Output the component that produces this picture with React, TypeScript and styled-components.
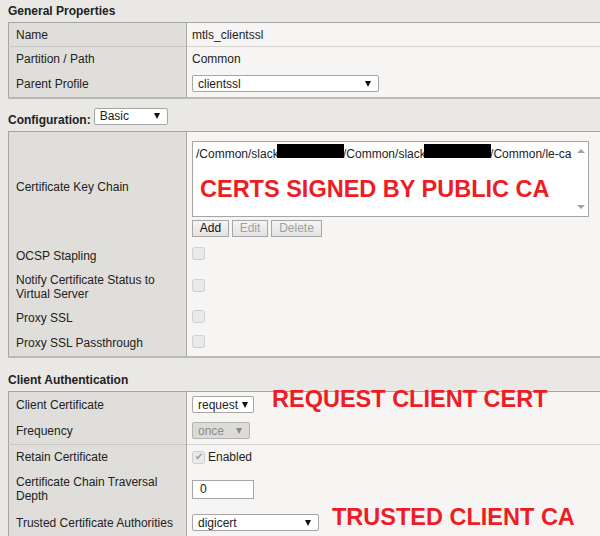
import React from 'react'
import styled, { createGlobalStyle } from 'styled-components'

const GlobalStyle = createGlobalStyle`
  body {
    margin: 0;
    background: #e9e8e4;
    font-family: "Liberation Sans", Arial, sans-serif;
    font-size: 12px;
    color: #222;
    overflow: hidden;
  }
`

const Page = styled.div`
  padding-left: 8px;
  width: 640px;
`

const SectionTitle = styled.div<{ $top: number }>`
  font-weight: bold;
  font-size: 12px;
  line-height: 14px;
  padding-top: ${p => p.$top}px;
  height: 14px;
  margin-bottom: 4px;
`

const ConfigBar = styled.div`
  display: flex;
  align-items: flex-end;
  gap: 3px;
  margin-top: 9px;
  margin-bottom: 6px;
`

const ConfigLabel = styled.span`
  font-weight: bold;
  line-height: 12px;
  position: relative;
  top: 1px;
`

const Table = styled.table`
  width: 620px;
  border-collapse: collapse;
  border-top: 1px solid #a4a4a4;
  border-left: 1px solid #a4a4a4;
  border-bottom: 2px solid #b9b9b9;
`

const Row = styled.tr<{ $h: number }>`
  height: ${p => p.$h}px;
  & + & td {
    border-top: 1px solid #d3d2cf;
  }
  & + & th {
    border-top: 1px solid #c9c8c5;
  }
`

const Label = styled.th`
  width: 163px;
  background: #dfdedb;
  border-right: 1px solid #a9a9a9;
  padding: 0 7px;
  text-align: left;
  font-weight: normal;
  line-height: 14px;
  vertical-align: middle;
`

const Value = styled.td<{ $top?: boolean }>`
  background: #f6f5f3;
  padding: ${p => (p.$top ? '9px 5px 6px' : '0 5px')};
  vertical-align: ${p => (p.$top ? 'top' : 'middle')};
  line-height: 14px;
`

const CellLine = styled.div`
  display: flex;
  align-items: center;
`

const SelectBox = styled.div<{ $w: number; $disabled?: boolean }>`
  box-sizing: border-box;
  width: ${p => p.$w}px;
  height: 17px;
  display: flex;
  align-items: center;
  justify-content: space-between;
  padding: 0 7px 0 5px;
  border: 1px solid ${p => (p.$disabled ? '#b4b4b0' : '#a6a6a6')};
  border-radius: 2px;
  background: ${p => (p.$disabled ? '#dcdbd7' : '#fff')};
  color: ${p => (p.$disabled ? '#8a8a8a' : '#222')};
  line-height: 14px;
`

const Arrow = styled.span<{ $disabled?: boolean }>`
  flex: none;
  width: 0;
  height: 0;
  margin-left: 4px;
  border-left: 3.5px solid transparent;
  border-right: 3.5px solid transparent;
  border-top: 6px solid ${p => (p.$disabled ? '#8a8a8a' : '#111')};
`

const Select = ({ w, value, disabled }: { w: number; value: string; disabled?: boolean }) => (
  <SelectBox $w={w} $disabled={disabled}>
    <span>{value}</span>
    <Arrow $disabled={disabled} />
  </SelectBox>
)

const ListBox = styled.div`
  box-sizing: border-box;
  width: 397px;
  height: 76px;
  border: 1px solid #a6a6a6;
  background: #fff;
  display: flex;
`

const ListContent = styled.div`
  flex: 1;
  padding: 2px 0 0 3px;
  white-space: nowrap;
  overflow: hidden;
`

const Redacted = styled.span`
  display: inline-block;
  width: 67px;
  height: 14px;
  background: #000;
  vertical-align: 0;
  margin: 0 -1px 0 -5px;
`

const Scroll = styled.div`
  width: 15px;
  display: flex;
  flex-direction: column;
  justify-content: space-between;
  align-items: center;
  padding: 7px 0;
`

const ScrollArrow = styled.span<{ $up?: boolean }>`
  width: 0;
  height: 0;
  border-left: 4px solid transparent;
  border-right: 4px solid transparent;
  ${p => (p.$up ? 'border-bottom: 4px solid #a3a3a3;' : 'border-top: 4px solid #a3a3a3;')}
`

const Annotation = styled.span<{ $ml?: number }>`
  color: #ee1c25;
  font-weight: bold;
  font-size: 23.5px;
  line-height: 20px;
  margin-left: ${p => p.$ml ?? 0}px;
  white-space: nowrap;
  position: relative;
  top: -6px;
`

const BigNote = styled.div`
  color: #ee1c25;
  font-weight: bold;
  font-size: 23.5px;
  line-height: 22px;
  margin: 17px 0 0 4px;
`

const Buttons = styled.div`
  display: flex;
  gap: 3px;
  margin-top: 3px;
`

const Button = styled.div<{ $disabled?: boolean; $w: number }>`
  box-sizing: border-box;
  width: ${p => p.$w}px;
  height: 17px;
  border: 1px solid #a6a6a6;
  background: linear-gradient(#f4f4f4, #e3e3e3);
  color: ${p => (p.$disabled ? '#a0a0a0' : '#111')};
  text-align: center;
  line-height: 15px;
`

const Check = styled.span<{ $lift?: number }>`
  box-sizing: border-box;
  width: 13px;
  height: 13px;
  border: 1px solid #cfcfcf;
  border-radius: 3px;
  background: #eaeaea;
  display: inline-flex;
  align-items: center;
  justify-content: center;
  color: #9a9a9a;
  font-size: 10px;
  line-height: 1;
  position: relative;
  top: ${p => -(p.$lift ?? 0)}px;
`

const CheckText = styled.span`
  margin-left: 3px;
`

const TextInput = styled.div`
  box-sizing: border-box;
  width: 62px;
  height: 19px;
  border: 1px solid #a6a6a6;
  background: #fff;
  padding: 0 7px;
  line-height: 17px;
`

const CheckRowValue = styled(Value)`
  vertical-align: top;
  padding-top: 4px;
`

export default function App() {
  return (
    <Page>
      <GlobalStyle />
      <SectionTitle $top={4}>General Properties</SectionTitle>
      <Table>
        <tbody>
          <Row $h={24}>
            <Label>Name</Label>
            <Value>mtls_clientssl</Value>
          </Row>
          <Row $h={24}>
            <Label>Partition / Path</Label>
            <Value>Common</Value>
          </Row>
          <Row $h={27}>
            <Label>Parent Profile</Label>
            <Value>
              <Select w={187} value="clientssl" />
            </Value>
          </Row>
        </tbody>
      </Table>

      <ConfigBar>
        <ConfigLabel>Configuration:</ConfigLabel>
        <Select w={74} value="Basic" />
      </ConfigBar>
      <Table>
        <tbody>
          <Row $h={111}>
            <Label>Certificate Key Chain</Label>
            <Value $top>
              <ListBox>
                <ListContent>
                  /Common/slack.<Redacted />/Common/slack.<Redacted />/Common/le-ca
                  <BigNote>CERTS SIGNED BY PUBLIC CA</BigNote>
                </ListContent>
                <Scroll>
                  <ScrollArrow $up />
                  <ScrollArrow />
                </Scroll>
              </ListBox>
              <Buttons>
                <Button $w={37}>Add</Button>
                <Button $w={36} $disabled>Edit</Button>
                <Button $w={51} $disabled>Delete</Button>
              </Buttons>
            </Value>
          </Row>
          <Row $h={26}>
            <Label>OCSP Stapling</Label>
            <CheckRowValue>
              <Check />
            </CheckRowValue>
          </Row>
          <Row $h={37}>
            <Label>Notify Certificate Status to Virtual Server</Label>
            <Value>
              <CellLine>
                <Check $lift={2} />
              </CellLine>
            </Value>
          </Row>
          <Row $h={25}>
            <Label>Proxy SSL</Label>
            <CheckRowValue>
              <Check />
            </CheckRowValue>
          </Row>
          <Row $h={26}>
            <Label>Proxy SSL Passthrough</Label>
            <CheckRowValue>
              <Check />
            </CheckRowValue>
          </Row>
        </tbody>
      </Table>

      <SectionTitle $top={15}>Client Authentication</SectionTitle>
      <Table>
        <tbody>
          <Row $h={27}>
            <Label>Client Certificate</Label>
            <Value>
              <CellLine>
                <Select w={62} value="request" />
                <Annotation $ml={18}>REQUEST CLIENT CERT</Annotation>
              </CellLine>
            </Value>
          </Row>
          <Row $h={26}>
            <Label>Frequency</Label>
            <Value>
              <Select w={58} value="once" disabled />
            </Value>
          </Row>
          <Row $h={26}>
            <Label>Retain Certificate</Label>
            <Value>
              <CellLine>
                <Check>✔</Check>
                <CheckText>Enabled</CheckText>
              </CellLine>
            </Value>
          </Row>
          <Row $h={38}>
            <Label>Certificate Chain Traversal Depth</Label>
            <Value>
              <TextInput>0</TextInput>
            </Value>
          </Row>
          <Row $h={30}>
            <Label>Trusted Certificate Authorities</Label>
            <Value>
              <CellLine>
                <Select w={127} value="digicert" />
                <Annotation $ml={13}>TRUSTED CLIENT CA</Annotation>
              </CellLine>
            </Value>
          </Row>
        </tbody>
      </Table>
    </Page>
  )
}
